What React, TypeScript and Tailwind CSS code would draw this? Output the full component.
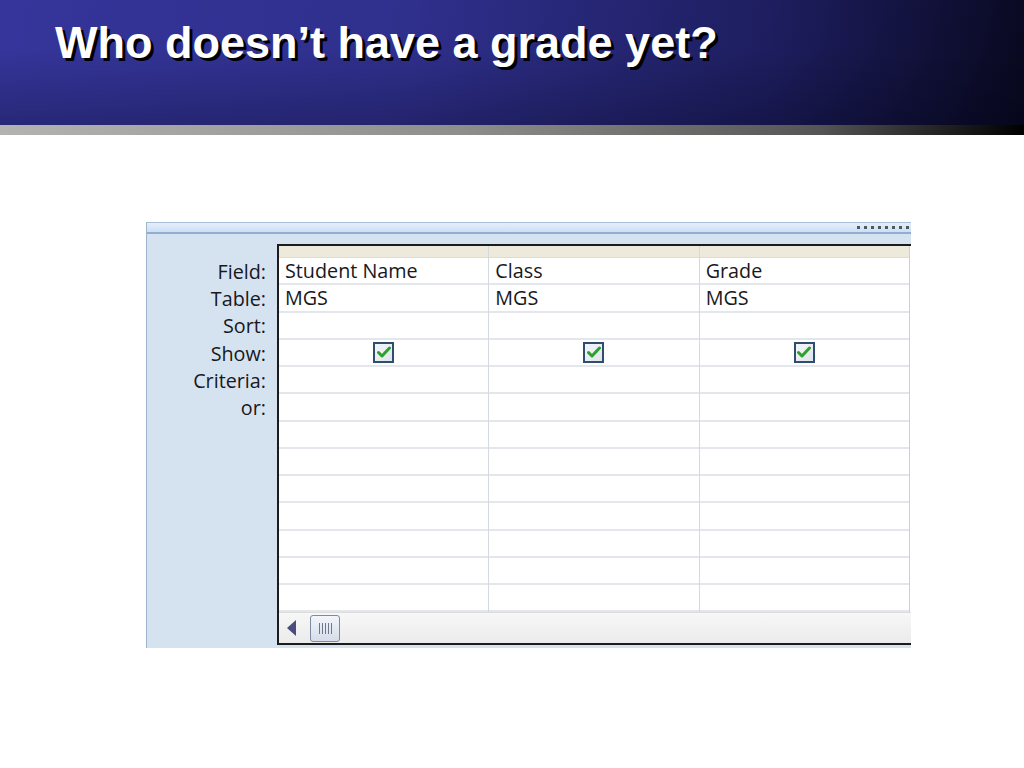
import { Fragment } from 'react';

const labels = ['Field:', 'Table:', 'Sort:', 'Show:', 'Criteria:', 'or:'];
const columns = [
  { field: 'Student Name', table: 'MGS' },
  { field: 'Class', table: 'MGS' },
  { field: 'Grade', table: 'MGS' },
];
const rowCount = 13;

function CheckBox() {
  return (
    <div className="w-[21px] h-[21px] border-2 border-[#2f4d6e] bg-[linear-gradient(135deg,#f4f6f8,#dfe5ec)] flex items-center justify-center">
      <svg width="14" height="12" viewBox="0 0 14 12">
        <path d="M1.5 6.5 L5 10 L12.5 2" fill="none" stroke="#2ea02e" strokeWidth="3" strokeLinecap="round" strokeLinejoin="round" />
      </svg>
    </div>
  );
}

function Column({ field, table, last }: { field: string; table: string; last?: boolean }) {
  return (
    <div className={`flex-1 flex flex-col ${last ? 'border-r border-[#c9d0d8]' : 'border-r border-[#d4d9df]'}`}>
      <div className="h-[12px] bg-[#edeadb] border-b border-[#e1ddc8]" />
      {Array.from({ length: rowCount }).map((_, i) => (
        <div key={i} className="h-[27.25px] border-b-2 border-[#e3e6ea] flex items-center pl-[6px] text-[19.75px] text-[#18181e]">
          {i === 0 && field}
          {i === 1 && table}
          {i === 3 && (
            <div className="flex-1 flex justify-center pr-[6px]">
              <CheckBox />
            </div>
          )}
        </div>
      ))}
    </div>
  );
}

export default function App() {
  return (
    <div className="w-[1024px] h-[768px] bg-white overflow-hidden flex flex-col" style={{ fontFamily: '"Liberation Sans", Arial, sans-serif' }}>
      {/* Title banner */}
      <div className="h-[125px] bg-[linear-gradient(100deg,#35359b_0%,#2f2f8c_40%,#1d1d5e_75%,#08081e_100%)] relative">
        <div className="absolute inset-0 bg-[linear-gradient(180deg,rgba(0,0,0,0)_40%,rgba(0,0,20,0.25)_100%)]" />
        <h1 className="absolute left-[55px] top-[9px] text-[45px] font-bold text-white [text-shadow:3px_3px_0_#000]">
          Who doesn’t have a grade yet?
        </h1>
      </div>
      <div className="h-[10px] bg-[linear-gradient(90deg,#b3b3b1_0%,#8e8e8c_45%,#555555_80%,#000000_100%)]" />

      {/* Query design grid screenshot */}
      <div className="ml-[146px] mt-[87px] w-[765px] h-[426px] flex flex-col border-l border-[#9fb4cc]" style={{ fontFamily: '"Open Sans", "Noto Sans", sans-serif' }}>
        <div className="h-[12px] bg-[linear-gradient(180deg,#e4eefa,#cddff3)] border-t border-[#a9bfd9] border-b-2 border-b-[#8eaed3] flex items-center justify-end pr-[2px] gap-[4px]">
          {Array.from({ length: 8 }).map((_, i) => (
            <div key={i} className="w-[3px] h-[3px] bg-[#4e5864]" />
          ))}
        </div>
        <div className="flex-1 flex bg-[#d5e3f0]">
          {/* Row labels */}
          <div className="w-[130px] pt-[24px] pr-[11px] flex flex-col items-end text-[19.75px] text-[#18181e]">
            {labels.map(l => (
              <Fragment key={l}>
                <div className="h-[27.25px] flex items-center">{l}</div>
              </Fragment>
            ))}
          </div>
          {/* Grid */}
          <div className="flex-1 mt-[10px] mb-[3px] flex flex-col bg-white border-l-2 border-t-2 border-b-2 border-[#1c1c1c]">
            <div className="flex">
              {columns.map((c, i) => (
                <Column key={c.field} field={c.field} table={c.table} last={i === columns.length - 1} />
              ))}
              <div className="w-[1px]" />
            </div>
            <div className="flex-1 bg-[linear-gradient(180deg,#f7f7f7,#ebebeb)] border-t border-[#dcdcdc] flex items-center pl-[8px] gap-[13px]">
              <svg width="10" height="16" viewBox="0 0 10 16">
                <path d="M9 0 L0 8 L9 16 Z" fill="#4b4b80" />
              </svg>
              <div className="w-[30px] h-[27px] rounded-[3px] border border-[#7d8aa3] bg-[linear-gradient(180deg,#f2f5fa,#d6dde9)] flex items-center justify-center gap-[2px]">
                {Array.from({ length: 5 }).map((_, i) => (
                  <div key={i} className="w-[1px] h-[11px] bg-[#6d7890]" />
                ))}
              </div>
            </div>
          </div>
        </div>
      </div>
    </div>
  );
}
